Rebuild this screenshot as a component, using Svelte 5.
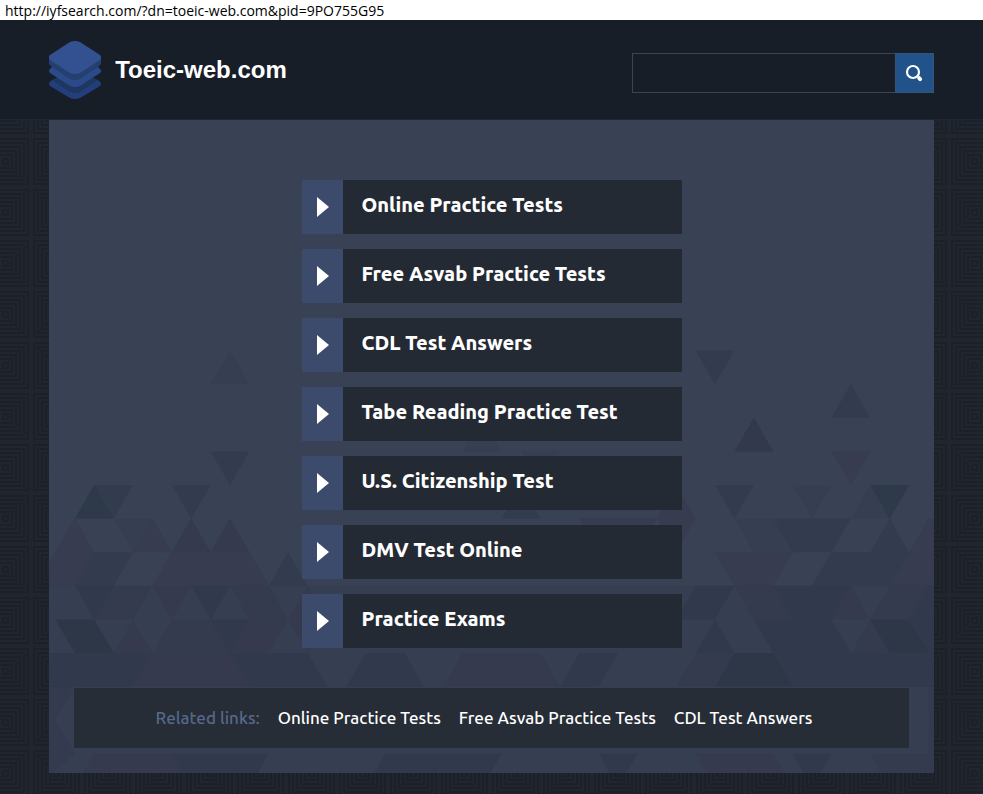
<script lang="ts">
  type Shape = {
    tone: string
    points: string
  }

  const links = [
    'Online Practice Tests',
    'Free Asvab Practice Tests',
    'CDL Test Answers',
    'Tabe Reading Practice Test',
    'U.S. Citizenship Test',
    'DMV Test Online',
    'Practice Exams',
  ]

  const related = links.slice(0, 3)

  let query = $state('')

  // points are in grid units: half a triangle wide, one triangle high
  const shapes: Shape[] = [
    { tone: 'faint', points: '-2,3 46,3 46,6 -2,6' },
    { tone: 'faint', points: '7,-3 8,-4 9,-3' },
    { tone: 'mid', points: '7,-1 9,-1 8,0' },
    { tone: 'dark', points: '0,1 1,0 2,1' },
    { tone: 'mid', points: '1,0 3,0 2,1' },
    { tone: 'mid', points: '5,0 7,0 6,1' },
    { tone: 'plum', points: '0,1 1,2 0,3 -2,3' },
    { tone: 'faint', points: '2,1 4,1 3,2' },
    { tone: 'plum', points: '3,2 4,1 5,2' },
    { tone: 'mid', points: '1,2 3,2 1,4 0,3' },
    { tone: 'plum', points: '6,1 7,2 6,3 5,4 4,3' },
    { tone: 'faint', points: '6,1 7,2 5,2' },
    { tone: 'plum', points: '8,1 10,3 6,3' },
    { tone: 'faint', points: '8,1 9,2 7,2' },
    { tone: 'mid', points: '6,3 8,3 7,4' },
    { tone: 'mid', points: '10,3 11,2 12,3' },
    { tone: 'faint', points: '2,3 4,3 3,4 1,4' },
    { tone: 'faint', points: '8,3 10,3 11,4 9,4' },
    { tone: 'dark', points: '-1,4 1,4 2,5 0,5' },
    { tone: 'plum', points: '2,5 3,4 4,5' },
    { tone: 'mid', points: '2,5 4,5 3,6' },
    { tone: 'faint', points: '5,4 7,4 8,5 4,5' },
    { tone: 'mid', points: '7,4 9,4 8,5' },
    { tone: 'plum', points: '9,4 11,4 10,5 8,5' },
    { tone: 'mid', points: '-2,5 2,5 3,6 -2,6' },
    { tone: 'plum', points: '4,5 8,5 9,6 3,6' },
    { tone: 'mid', points: '8,5 12,5 13,6 9,6' },
    { tone: 'plum', points: '12,3 13,4 12,5 11,4' },
    { tone: 'mid', points: '15,5 17,5 18,6 14,6' },
    { tone: 'plum', points: '20,5 24,5 25,6 19,6' },
    { tone: 'mid', points: '26,5 28,5 27,6 25,6' },
    { tone: 'faint', points: '20,-1 21,-2 22,-1' },
    { tone: 'faint', points: '23,-1 25,-1 24,0' },
    { tone: 'mid', points: '22,1 23,0 24,1' },
    { tone: 'plum', points: '26,1 30,1 29,2 27,2' },
    { tone: 'plum', points: '30,1 31,0 32,1 31,2' },
    { tone: 'mid', points: '32,-4 34,-4 33,-3' },
    { tone: 'mid', points: '39,-2 40,-3 41,-2' },
    { tone: 'plum', points: '34,-1 35,-2 36,-1' },
    { tone: 'mid', points: '34,-1 35,-2 36,-1' },
    { tone: 'plum', points: '39,-1 41,-1 40,0' },
    { tone: 'mid', points: '33,0 35,0 34,1' },
    { tone: 'faint', points: '37,0 39,0 38,1' },
    { tone: 'dark', points: '41,0 43,0 42,1' },
    { tone: 'faint', points: '40,1 41,0 42,1' },
    { tone: 'faint', points: '34,1 36,1 37,2 35,2' },
    { tone: 'mid', points: '36,1 40,1 39,2 37,2' },
    { tone: 'mid', points: '41,2 42,1 43,2' },
    { tone: 'plum', points: '43,2 44,1 46,1 46,3 42,3' },
    { tone: 'plum', points: '33,2 37,2 36,3 34,3' },
    { tone: 'mid', points: '39,2 43,2 42,3 38,3' },
    { tone: 'mid', points: '32,3 34,3 33,4 31,4' },
    { tone: 'faint', points: '34,3 36,3 37,4 35,4' },
    { tone: 'mid', points: '36,3 40,3 39,4 37,4' },
    { tone: 'plum', points: '39,4 40,3 41,4' },
    { tone: 'faint', points: '42,3 44,3 43,4 41,4' },
    { tone: 'mid', points: '43,4 44,3 46,3 46,5 44,5' },
    { tone: 'mid', points: '32,5 33,4 34,5' },
    { tone: 'mid', points: '35,4 39,4 40,5 36,5' },
    { tone: 'dark', points: '41,4 43,4 44,5 42,5' },
    { tone: 'faint', points: '40,5 41,4 42,5' },
    { tone: 'faint', points: '32,5 34,5 33,6 31,6' },
    { tone: 'dark', points: '34,5 36,5 37,6 33,6' },
    { tone: 'mid', points: '36,5 46,5 46,6 37,6' },
    { tone: 'faint', points: '-2,6 46,6 46,9 -2,9' },
    { tone: 'faint', points: '-2,6 0,6 -1,7 0,8 -2,9' },
    { tone: 'plum', points: '1,8 5,8 6,9 0,9' },
    { tone: 'mid', points: '5,8 10,8 9,9 6,9' },
    { tone: 'mid', points: '16,8 22,8 21,9 15,9' },
    { tone: 'mid', points: '27,8 29,8 28,9' },
    { tone: 'plum', points: '32,8 36,8 37,9 33,9' },
    { tone: 'mid', points: '37,8 39,8 38,9' },
    { tone: 'faint', points: '41,8 46,8 46,9 42,9' },
    { tone: 'plum', points: '44,6 46,6 46,8 44,8' },
  ]
</script>

<div class="address">http://iyfsearch.com/?dn=toeic-web.com&amp;pid=9PO755G95</div>

<header>
  <div class="container header-inner">
    <a class="brand" href="#home">
      <svg class="logo" viewBox="0 0 52 58" aria-hidden="true">
        <path fill="#223e7b" d="M0 42l3-3h46l3 3v1q0 1-1 2L31 57q-5 2-10 0L1 45q-1-1-1-2z" />
        <path fill="#1e3660" d="M3 39l8-4h30l8 4L31 51q-5 2-10 0z" />
        <path fill="#2b4a8a" d="M0 29l3-3h46l3 3v1q0 1-1 2L31 45q-5 2-10 0L1 32q-1-1-1-2z" />
        <path fill="#25406e" d="M0 18h52v5l-3 3L31 38q-5 2-10 0L3 26l-3-3z" />
        <path fill="#335091" d="M1 14L21 1q5-2 10 0l20 13q1 1 1 2v1q0 1-1 2L31 32q-5 2-10 0L1 19q-1-1-1-2v-1q0-1 1-2z" />
      </svg>
      <span>Toeic-web.com</span>
    </a>
    <form class="search" onsubmit={(e) => e.preventDefault()}>
      <input type="text" aria-label="Search" bind:value={query} />
      <button type="submit" aria-label="Submit search">
        <svg viewBox="0 0 18 18" aria-hidden="true">
          <circle cx="8" cy="8" r="6" fill="none" stroke="#fff" stroke-width="2.2" />
          <path d="M14.2 14.2l.9.9" stroke="#fff" stroke-width="4" stroke-linecap="round" />
        </svg>
      </button>
    </form>
  </div>
</header>

<main>
  <div class="container panel">
    <svg class="mosaic" viewBox="0 0 885 653" preserveAspectRatio="xMidYMax slice" aria-hidden="true">
      <g transform="translate(26 365) scale(19.4 33.6)">
        {#each shapes as { tone, points }}
          <polygon class={tone} {points} />
        {/each}
      </g>
    </svg>

    <ul class="links">
      {#each links as link}
        <li>
          <a href="#search">
            <span class="arrow">
              <svg viewBox="0 0 12 20" aria-hidden="true"><path d="M0 0l12 10L0 20z" fill="#fff" /></svg>
            </span>
            <span class="link-text">{link}</span>
          </a>
        </li>
      {/each}
    </ul>

    <nav class="related" aria-label="Related links">
      <span class="related-title">Related links:</span>
      {#each related as link}
        <a href="#search">{link}</a>
      {/each}
    </nav>
  </div>
</main>

<style>
  :global(body) {
    margin: 0;
    background: #20252e;
    font-family: Ubuntu, 'Open Sans', sans-serif;
  }

  a {
    color: #fff;
    text-decoration: none;
  }

  .address {
    height: 20px;
    padding-left: 5px;
    background: #fff;
    color: #000;
    font: 14px/22px 'Open Sans', sans-serif;
    white-space: nowrap;
    box-sizing: border-box;
  }

  .container {
    width: 90%;
    margin: 0 auto;
  }

  header {
    background: #181e27;
    border-bottom: 1px solid #20262f;
  }

  .header-inner {
    display: flex;
    align-items: center;
    justify-content: space-between;
    height: 99px;
  }

  .brand {
    display: flex;
    align-items: center;
    gap: 14px;
    font: bold 24px/28px 'Liberation Sans', Arial, sans-serif;
  }

  .logo {
    width: 52px;
    height: 58px;
  }

  .search {
    display: flex;
    width: 302px;
    height: 40px;
    margin-top: 7px;
  }

  .search input {
    flex: 1;
    min-width: 0;
    padding: 0 10px;
    background: transparent;
    border: 1px solid #3c444e;
    border-right: 0;
    border-radius: 0;
    color: #fff;
    font-size: 16px;
    outline: none;
  }

  .search button {
    display: flex;
    align-items: center;
    justify-content: center;
    width: 39px;
    padding: 0;
    background: #22528a;
    border: 1px solid #345378;
    cursor: pointer;
  }

  .search svg {
    width: 18px;
    height: 18px;
  }

  main {
    padding-bottom: 21px;
    background: #20252e
      url("data:image/svg+xml,%3Csvg xmlns='http://www.w3.org/2000/svg' width='51' height='51' fill='none' stroke='%231b2029' stroke-width='2'%3E%3Cpath d='M3 3h45v45H3zM7 7h37v37H7zM11 11h29v29H11zM15 15h21v21H15zM19 19h13v13H19zM23 23h5v5h-5z'/%3E%3C/svg%3E")
      -20px -35px;
  }

  .panel {
    position: relative;
    box-sizing: border-box;
    padding: 60px 25px 25px;
    background: #394154;
  }

  .mosaic {
    position: absolute;
    inset: 0;
    width: 100%;
    height: 100%;
  }

  .faint {
    fill: #2c3448;
    fill-opacity: 0.2;
  }

  .plum {
    fill: #33344a;
    fill-opacity: 0.35;
  }

  .mid {
    fill: #2b3547;
    fill-opacity: 0.4;
  }

  .dark {
    fill: #283342;
    fill-opacity: 0.6;
  }

  .links {
    position: relative;
    display: grid;
    gap: 15px;
    max-width: 380px;
    margin: 0 auto 40px;
    padding: 0;
    list-style: none;
  }

  .links a {
    display: flex;
    height: 54px;
    background: #242a33;
    font-size: 20px;
    font-weight: 800;
    line-height: 50px;
  }

  .arrow {
    display: flex;
    align-items: center;
    justify-content: center;
    box-sizing: border-box;
    width: 41px;
    padding-left: 1px;
    background: #3c4a6b;
  }

  .arrow svg {
    width: 12px;
    height: 20px;
  }

  .link-text {
    padding-left: 19px;
  }

  .related {
    position: relative;
    display: flex;
    justify-content: center;
    gap: 18px;
    padding-right: 15px;
    background: #262d36;
    font-size: 17px;
    font-weight: 500;
    line-height: 60px;
  }

  .related-title {
    color: #56698a;
  }
</style>
